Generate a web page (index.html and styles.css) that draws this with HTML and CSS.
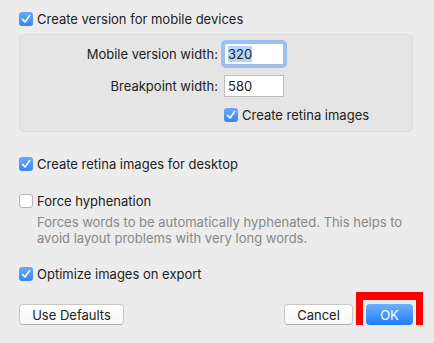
FILE: index.html
```html
<!DOCTYPE html>
<html lang="en">
<head>
    <meta charset="UTF-8">
    <title>Export Settings</title>
    <link rel="stylesheet" href="styles.css">
</head>
<body>

    <div class="dialog">

        <!-- Mobile version -->
        <label class="check-row">
            <span class="checkbox checked"><svg viewBox="0 0 14 14"><path d="M3.6 7.4 L6 10 L10.6 3.6"/></svg></span>
            Create version for mobile devices
        </label>

        <div class="panel">
            <span class="field-label">Mobile version width:</span>
            <span class="field focused"><span class="selected">320</span></span>

            <span class="field-label">Breakpoint width:</span>
            <span class="field">580</span>

            <span></span>
            <label class="check-row">
                <span class="checkbox checked"><svg viewBox="0 0 14 14"><path d="M3.6 7.4 L6 10 L10.6 3.6"/></svg></span>
                Create retina images
            </label>
        </div>

        <!-- Desktop -->
        <label class="check-row section">
            <span class="checkbox checked"><svg viewBox="0 0 14 14"><path d="M3.6 7.4 L6 10 L10.6 3.6"/></svg></span>
            Create retina images for desktop
        </label>

        <label class="check-row hyphen">
            <span class="checkbox"></span>
            Force hyphenation
        </label>
        <p class="hint">Forces words to be automatically hyphenated. This helps to avoid layout problems with very long words.</p>

        <label class="check-row optimize">
            <span class="checkbox checked"><svg viewBox="0 0 14 14"><path d="M3.6 7.4 L6 10 L10.6 3.6"/></svg></span>
            Optimize images on export
        </label>

        <!-- Buttons -->
        <div class="buttons">
            <button class="btn defaults">Use Defaults</button>
            <span class="spacer"></span>
            <button class="btn cancel">Cancel</button>
            <span class="highlight"><button class="btn primary">OK</button></span>
        </div>

    </div>

</body>
</html>
```

FILE: styles.css
```css
body {
    margin: 0;
    background-color: #ececec;
    font-family: Inter, "Noto Sans", sans-serif;
    font-size: 13px;
    color: #222;
}

.dialog {
    padding: 11px 21px 0 19px;
}

.check-row {
    display: flex;
    align-items: center;
    height: 16px;
    white-space: nowrap;
}

.checkbox {
    width: 14px;
    height: 14px;
    box-sizing: border-box;
    margin-right: 4px;
    border-radius: 3px;
    background-color: #fff;
    border: 1px solid #b4b4b4;
    flex-shrink: 0;
}

.checkbox.checked {
    border: none;
    background: linear-gradient(#69a9f8, #3b85f1);
}

.checkbox svg {
    display: block;
    width: 14px;
    height: 14px;
}

.checkbox path {
    fill: none;
    stroke: #fff;
    stroke-width: 1.6;
    stroke-linecap: round;
    stroke-linejoin: round;
}

.panel {
    margin-top: 7px;
    height: 98px;
    box-sizing: border-box;
    padding: 8px 0 0 0;
    background-color: #e5e5e5;
    border: 1px solid #dcdcdc;
    border-radius: 5px;
    display: grid;
    grid-template-columns: 198px 1fr;
    column-gap: 6px;
    row-gap: 10px;
    align-items: center;
    align-content: start;
}

.field-label {
    text-align: right;
}

.field {
    width: 60px;
    height: 22px;
    box-sizing: border-box;
    padding: 0 3px;
    background-color: #fff;
    border: 1px solid #bdbdbd;
    display: flex;
    align-items: center;
}

.field.focused {
    border-color: #9fbfe6;
    box-shadow: 0 0 0 3px #9cc0f2;
    border-radius: 2px;
}

.selected {
    background-color: #b3d4fc;
}

.section {
    margin-top: 24px;
}

.hyphen {
    margin-top: 21px;
}

.hint {
    margin: 5px 0 0 18px;
    line-height: 16px;
    color: #888;
}

.optimize {
    margin-top: 20px;
}

.buttons {
    display: flex;
    align-items: flex-start;
    margin-top: 22px;
}

.spacer {
    flex: 1;
}

.btn {
    height: 21px;
    padding: 0;
    font-family: inherit;
    font-size: 13px;
    color: #222;
    background: linear-gradient(#fff, #f7f7f7);
    border: 1px solid #c8c8c8;
    border-bottom-color: #b0b0b0;
    border-radius: 4px;
}

.defaults {
    width: 105px;
}

.cancel {
    width: 69px;
}

/* red annotation box round the OK button */
.highlight {
    display: flex;
    margin: -12px -10px -12px 3px;
    padding: 4px 3px;
    border: solid #f00;
    border-width: 8px 7px;
}

.primary {
    width: 47px;
    color: #fff;
    border: none;
    background: linear-gradient(#6cb0fb, #1f7ef8);
}
```
